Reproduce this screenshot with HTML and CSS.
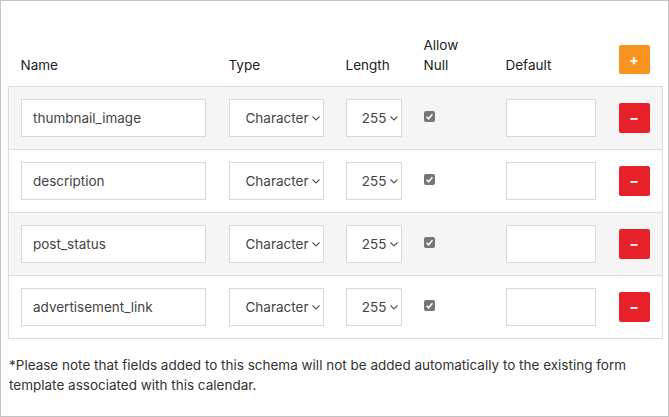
FILE: index.html
```html
<!DOCTYPE html>
<html>
<head>
<meta charset="utf-8">
<link rel="stylesheet" href="styles.css">
</head>
<body>
<div class="frame">
  <table class="schema">
    <colgroup>
      <col class="c-name"><col class="c-type"><col class="c-len"><col class="c-null"><col class="c-def"><col class="c-act">
    </colgroup>
    <thead>
      <tr>
        <th>Name</th>
        <th>Type</th>
        <th>Length</th>
        <th>Allow<br>Null</th>
        <th>Default</th>
        <th><button class="btn btn-add">+</button></th>
      </tr>
    </thead>
    <tbody>
      <tr class="alt">
        <td><div class="field name">thumbnail_image</div></td>
        <td><div class="field sel type"><span>Character</span><svg class="chev" viewBox="0 0 8 5"><path d="M0.5 0.5 L4 4 L7.5 0.5"/></svg></div></td>
        <td><div class="field sel len"><span>255</span><svg class="chev" viewBox="0 0 8 5"><path d="M0.5 0.5 L4 4 L7.5 0.5"/></svg></div></td>
        <td><span class="check"><svg viewBox="0 0 11 11"><path d="M2.6 5.8 L4.6 7.8 L8.4 3.2"/></svg></span></td>
        <td><div class="field def"></div></td>
        <td><button class="btn btn-del">&minus;</button></td>
      </tr>
      <tr>
        <td><div class="field name">description</div></td>
        <td><div class="field sel type"><span>Character</span><svg class="chev" viewBox="0 0 8 5"><path d="M0.5 0.5 L4 4 L7.5 0.5"/></svg></div></td>
        <td><div class="field sel len"><span>255</span><svg class="chev" viewBox="0 0 8 5"><path d="M0.5 0.5 L4 4 L7.5 0.5"/></svg></div></td>
        <td><span class="check"><svg viewBox="0 0 11 11"><path d="M2.6 5.8 L4.6 7.8 L8.4 3.2"/></svg></span></td>
        <td><div class="field def"></div></td>
        <td><button class="btn btn-del">&minus;</button></td>
      </tr>
      <tr class="alt">
        <td><div class="field name">post_status</div></td>
        <td><div class="field sel type"><span>Character</span><svg class="chev" viewBox="0 0 8 5"><path d="M0.5 0.5 L4 4 L7.5 0.5"/></svg></div></td>
        <td><div class="field sel len"><span>255</span><svg class="chev" viewBox="0 0 8 5"><path d="M0.5 0.5 L4 4 L7.5 0.5"/></svg></div></td>
        <td><span class="check"><svg viewBox="0 0 11 11"><path d="M2.6 5.8 L4.6 7.8 L8.4 3.2"/></svg></span></td>
        <td><div class="field def"></div></td>
        <td><button class="btn btn-del">&minus;</button></td>
      </tr>
      <tr>
        <td><div class="field name">advertisement_link</div></td>
        <td><div class="field sel type"><span>Character</span><svg class="chev" viewBox="0 0 8 5"><path d="M0.5 0.5 L4 4 L7.5 0.5"/></svg></div></td>
        <td><div class="field sel len"><span>255</span><svg class="chev" viewBox="0 0 8 5"><path d="M0.5 0.5 L4 4 L7.5 0.5"/></svg></div></td>
        <td><span class="check"><svg viewBox="0 0 11 11"><path d="M2.6 5.8 L4.6 7.8 L8.4 3.2"/></svg></span></td>
        <td><div class="field def"></div></td>
        <td><button class="btn btn-del">&minus;</button></td>
      </tr>
    </tbody>
  </table>
  <p class="note">*Please note that fields added to this schema will not be added automatically to the existing form template associated with this calendar.</p>
</div>
</body>
</html>
```
FILE: styles.css
```css
* { box-sizing: border-box; }
html, body { margin: 0; padding: 0; background: #fff; }
body { font-family: Inter, "Noto Sans", sans-serif; font-size: 13.5px; color: #333; }
.frame {
  width: 669px;
  height: 417px;
  border: 1px solid #c4c4c4;
  padding: 34px 7px 0 7px;
}
.schema {
  width: 654px;
  border-collapse: collapse;
  table-layout: fixed;
}
.c-name { width: 208px; }
.c-type { width: 117px; }
.c-len { width: 78px; }
.c-null { width: 82px; }
.c-def { width: 113px; }
.c-act { width: 56px; }
.schema th {
  text-align: left;
  font-weight: 400;
  vertical-align: bottom;
  padding: 0 0 11px 12px;
  line-height: 20px;
  color: #222;
}
.schema tbody { border: 1px solid #dcdcdc; }
.schema td {
  padding: 12px 0 12px 12px;
  vertical-align: middle;
  border-top: 1px solid #dcdcdc;
  height: 63px;
}
.schema tr.alt td { background: #f5f5f5; }
.field {
  height: 38px;
  border: 1px solid #d9d9d9;
  background: #fff;
  color: #444;
  line-height: 36px;
}
.field.name { width: 185px; padding-left: 11px; }
.field.type { width: 95px; }
.field.len { width: 56px; }
.field.def { width: 90px; }
.sel {
  display: flex;
  align-items: center;
  justify-content: flex-end;
  padding-right: 3px;
  gap: 3px;
}
.chev { width: 8px; height: 5px; fill: none; stroke: #555; stroke-width: 1.1; }
.check {
  display: block;
  width: 11px;
  height: 11px;
  margin-top: -4px;
  background: #767676;
  border-radius: 2px;
}
.check svg { display: block; width: 11px; height: 11px; fill: none; stroke: #fff; stroke-width: 1.6; }
.btn {
  display: block;
  width: 31px;
  height: 30px;
  border: 0;
  border-radius: 2px;
  color: #fff;
  font-family: Inter, sans-serif;
  font-weight: 700;
  font-size: 14px;
  padding: 0;
  line-height: 28px;
}
.btn-add { background: #f7931e; height: 29px; margin-bottom: 1px; }
.btn-del { background: #e8202a; }
.note {
  margin: 16px 0 0 1px;
  line-height: 20px;
  color: #333;
}
```
